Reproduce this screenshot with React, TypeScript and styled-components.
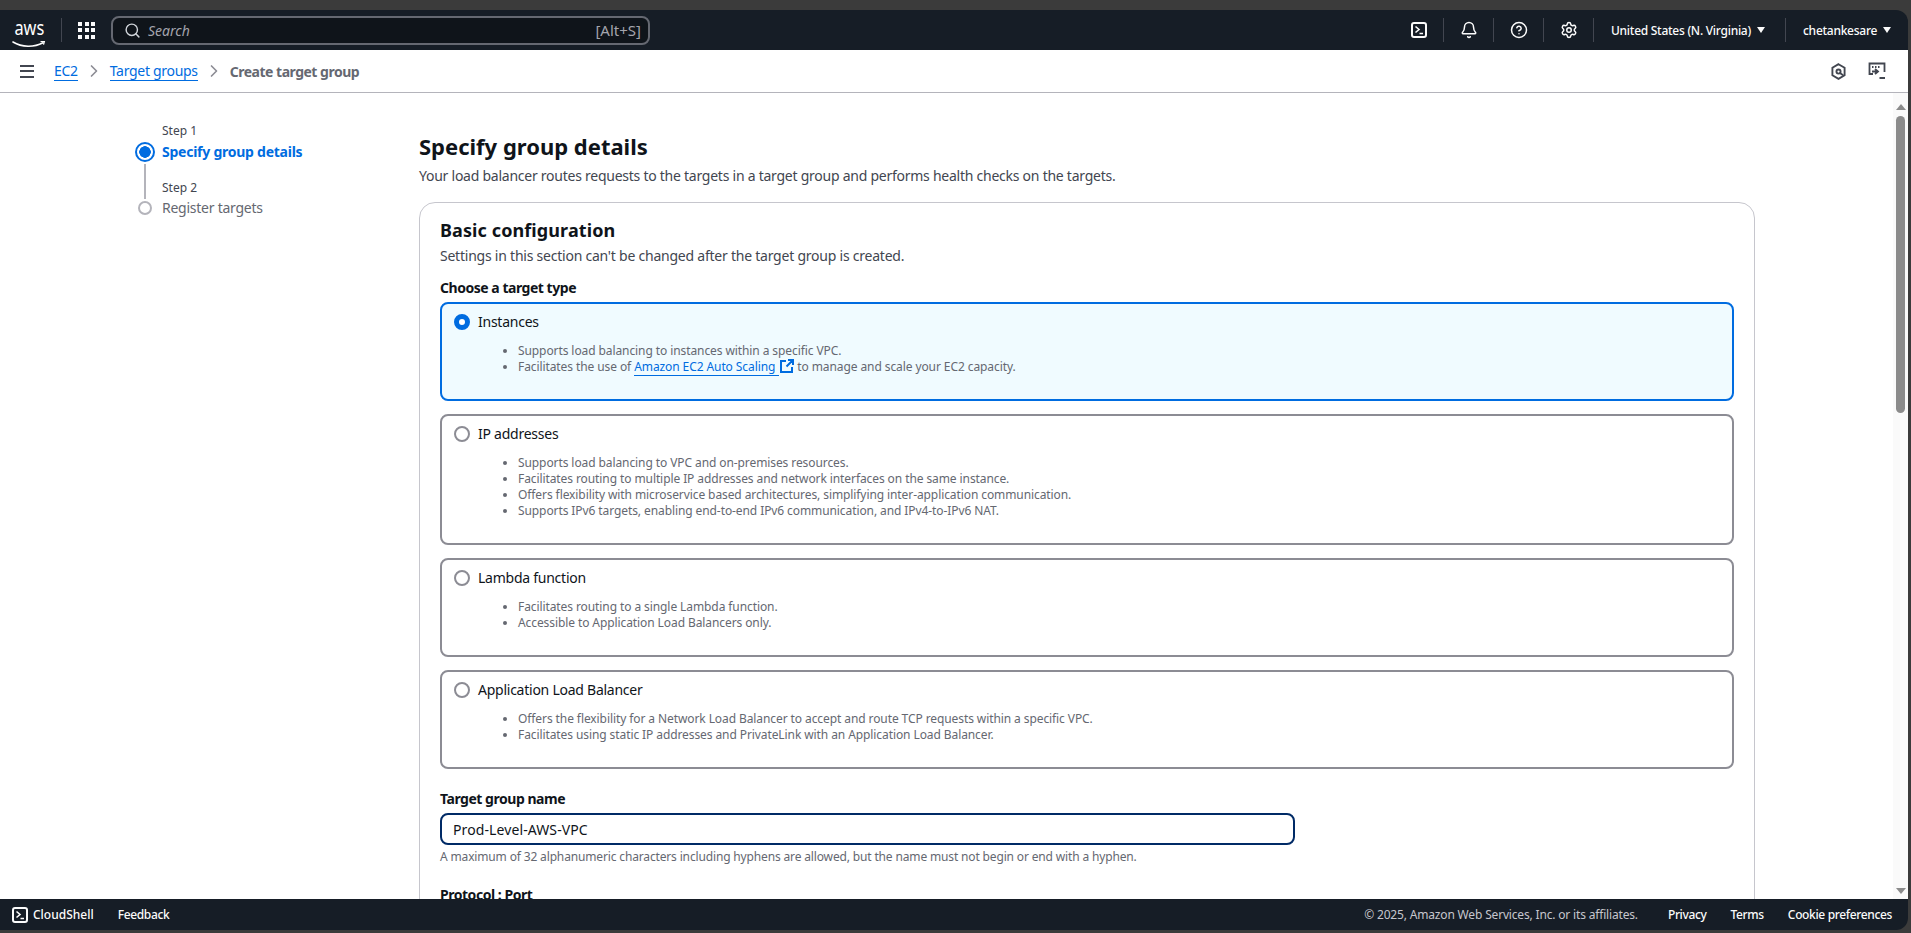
import React from 'react';
import styled, { createGlobalStyle } from 'styled-components';
import { Bell, ChevronRight, CircleHelp, Search, Settings } from 'lucide-react';

const GlobalStyle = createGlobalStyle`
  html, body {
    margin: 0;
    height: 100%;
    overflow: hidden;
    font-family: "Noto Sans", "Open Sans", Arial, sans-serif;
    color: #0f141a;
  }
  * { box-sizing: border-box; }
`;

const Frame = styled.div`
  height: 100vh;
  display: flex;
  flex-direction: column;
  padding: 10px 3px 3px 0;
  background: #3b3b3b;
`;

/* top navigation */
const TopNav = styled.header`
  height: 40px;
  flex: none;
  display: flex;
  align-items: center;
  padding-left: 12px;
  background: #161d26;
  border-radius: 0 12px 0 0;
  color: #fbfbfb;
`;

const NavDivider = styled.span`
  width: 1px;
  height: 24px;
  flex: none;
  background: #424650;
`;

const LogoLink = styled.a`
  width: 34px;
  height: 40px;
  flex: none;
  margin-right: 15px;
  display: flex;
  flex-direction: column;
  align-items: center;
  padding-top: 5px;
`;

const LogoText = styled.span`
  font-size: 19px;
  line-height: 26px;
  color: #fff;
  transform: scaleX(0.86);
`;

const GridButton = styled.span`
  margin: 0 16px 0 16px;
  display: grid;
  grid-template-columns: repeat(3, 4px);
  grid-gap: 2.5px;
  flex: none;
`;

const GridDot = styled.i`
  width: 4px;
  height: 4px;
  background: #fbfbfb;
  display: block;
`;

const SearchBox = styled.div`
  width: 539px;
  height: 29px;
  flex: none;
  display: flex;
  align-items: center;
  padding: 0 7px 0 11px;
  background: #0f141a;
  border: 2px solid #656871;
  border-radius: 8px;
  color: #a4a4ad;
  font-size: 15px;
`;

const SearchHint = styled.span`
  margin-left: 7px;
  font-size: 14px;
  font-style: italic;
  flex: 1;
`;

const NavSpacer = styled.div`
  flex: 1;
`;

const NavIcon = styled.span<{ $w: number }>`
  width: ${(p) => p.$w}px;
  display: flex;
  align-items: center;
  justify-content: center;
  flex: none;
`;

const NavMenu = styled.span<{ $left: number; $w: number }>`
  display: flex;
  align-items: center;
  flex: none;
  gap: 6px;
  width: ${(p) => p.$w}px;
  padding-left: ${(p) => p.$left}px;
  font-size: 12px;
  font-weight: 500;
  letter-spacing: -0.27px;
  white-space: nowrap;
`;

const Caret = styled.i`
  width: 0;
  height: 0;
  display: block;
  border-left: 4px solid transparent;
  border-right: 4px solid transparent;
  border-top: 6px solid #fbfbfb;
`;

/* breadcrumb bar */
const CrumbBar = styled.div`
  height: 43px;
  flex: none;
  display: flex;
  align-items: center;
  padding: 0 22px 0 20px;
  background: #fff;
  border-bottom: 1px solid #b4b4bb;
  font-size: 14px;
`;

const Hamburger = styled.span`
  width: 14px;
  height: 13px;
  margin-right: 20px;
  flex: none;
  border-top: 2px solid #424650;
  border-bottom: 2px solid #424650;
  position: relative;
  &::after {
    content: '';
    position: absolute;
    left: 0;
    right: 0;
    top: 3.5px;
    height: 2px;
    background: #424650;
  }
`;

const CrumbLink = styled.a`
  color: #006ce0;
  border-bottom: 1px solid #006ce0;
  line-height: 19px;
  letter-spacing: -0.3px;
`;

const CrumbSep = styled(ChevronRight)`
  width: 20px;
  height: 20px;
  margin: 0 6px;
  color: #8c8c94;
  flex: none;
`;

const CrumbCurrent = styled.span`
  color: #656871;
  font-weight: 700;
  letter-spacing: -0.5px;
`;

const CrumbTools = styled.div`
  margin-left: auto;
  display: flex;
  align-items: center;
  gap: 22px;
`;

/* page body */
const Body = styled.div`
  flex: 1;
  min-height: 0;
  display: flex;
  background: #fff;
`;

const Main = styled.main`
  flex: 1;
  min-width: 0;
  overflow: hidden;
  display: grid;
  grid-template-columns: 284px 1336px;
  padding-left: 135px;
  align-content: start;
`;

const Stepper = styled.nav`
  padding-top: 30px;
  display: grid;
  grid-template-columns: 20px 1fr;
  column-gap: 7px;
  align-content: start;
`;

const StepRail = styled.i`
  width: 2px;
  justify-self: center;
  margin: 2px 0 -1px;
  background: #b4b4bb;
  display: block;
`;

const StepLabel = styled.span<{ $second?: boolean }>`
  grid-column: 2;
  font-size: 12px;
  line-height: 16px;
  color: #424650;
  padding-top: ${(p) => (p.$second ? 18 : 0)}px;
  padding-bottom: ${(p) => (p.$second ? 2 : 3)}px;
`;

const StepDot = styled.span<{ $active?: boolean }>`
  justify-self: center;
  align-self: center;
  border-radius: 50%;
  width: ${(p) => (p.$active ? 20 : 14)}px;
  height: ${(p) => (p.$active ? 20 : 14)}px;
  border: 2px solid ${(p) => (p.$active ? '#006ce0' : '#b4b4bb')};
  background: ${(p) => (p.$active ? 'radial-gradient(circle, #006ce0 0 5.5px, #fff 6px)' : '#fff')};
`;

const StepTitle = styled.span<{ $active?: boolean }>`
  font-size: 14px;
  line-height: 20px;
  letter-spacing: -0.25px;
  font-weight: ${(p) => (p.$active ? 700 : 400)};
  color: ${(p) => (p.$active ? '#006ce0' : '#656871')};
`;

const Content = styled.section`
  padding-top: 38px;
`;

const PageTitle = styled.h1`
  margin: 0;
  font-size: 22px;
  line-height: 30px;
  font-weight: 700;
`;

const PageDesc = styled.p`
  margin: 5px 0 16px;
  font-size: 14px;
  line-height: 20px;
  letter-spacing: -0.25px;
  color: #424650;
`;

const Card = styled.div`
  border: 1px solid #c6c6cd;
  border-radius: 16px;
  padding: 16px 20px 20px;
`;

const CardTitle = styled.h2`
  margin: 0;
  font-size: 18px;
  line-height: 22px;
  font-weight: 700;
  letter-spacing: 0.1px;
`;

const CardDesc = styled.p`
  margin: 5px 0 12px;
  font-size: 14px;
  line-height: 20px;
  letter-spacing: -0.23px;
  color: #424650;
`;

const FieldLabel = styled.label`
  display: block;
  font-size: 14px;
  line-height: 20px;
  font-weight: 700;
  letter-spacing: -0.47px;
`;

const TileGroup = styled.div`
  margin: 4px 0 20px;
  display: flex;
  flex-direction: column;
  gap: 13px;
`;

const Tile = styled.div<{ $selected?: boolean }>`
  border: 2px solid ${(p) => (p.$selected ? '#006ce0' : '#8c8c94')};
  border-radius: 8px;
  background: ${(p) => (p.$selected ? '#f0fbff' : '#fff')};
  padding: 8px 12px 24px;
`;

const TileHead = styled.div`
  display: flex;
  align-items: center;
  gap: 8px;
  font-size: 14px;
  line-height: 20px;
  letter-spacing: -0.25px;
`;

const Radio = styled.span<{ $selected?: boolean }>`
  width: 16px;
  height: 16px;
  flex: none;
  border-radius: 50%;
  background: #fff;
  border: ${(p) => (p.$selected ? '5px solid #006ce0' : '2px solid #8c8c94')};
`;

const TileList = styled.ul`
  margin: 11px 0 0;
  padding: 0 0 0 64px;
  font-size: 12px;
  line-height: 16px;
  letter-spacing: -0.09px;
  color: #656871;
`;

const TileLink = styled.a`
  color: #006ce0;
  border-bottom: 1px solid #006ce0;
  padding-right: 4px;
`;

const ExternalIcon = styled.svg`
  width: 14px;
  height: 14px;
  margin: 0 3px 0 1px;
  vertical-align: -2px;
  fill: none;
  stroke: #006ce0;
  stroke-width: 2;
`;

const NameInput = styled.input`
  display: block;
  width: 855px;
  height: 32px;
  margin-top: 4px;
  padding: 0 11px;
  border: 2px solid #002a66;
  border-radius: 8px;
  outline: none;
  font: inherit;
  font-size: 14px;
  letter-spacing: 0.1px;
  color: #0f141a;
  background: #fff;
`;

const FieldHint = styled.p`
  margin: 4px 0 20px;
  font-size: 12px;
  line-height: 16px;
  letter-spacing: -0.15px;
  color: #656871;
`;

/* scrollbar column */
const ScrollColumn = styled.div`
  width: 15px;
  flex: none;
  background: #fafafa;
  display: flex;
  flex-direction: column;
  align-items: center;
  padding: 11px 0 5px 0;
`;

const ScrollArrow = styled.i<{ $down?: boolean }>`
  width: 0;
  height: 0;
  display: block;
  flex: none;
  border-left: 5px solid transparent;
  border-right: 5px solid transparent;
  border-bottom: ${(p) => (p.$down ? '0' : '6px solid #8b8b8b')};
  border-top: ${(p) => (p.$down ? '6px solid #8b8b8b' : '0')};
  margin-top: ${(p) => (p.$down ? 'auto' : '0')};
`;

const ScrollThumb = styled.div`
  width: 9px;
  height: 297px;
  margin-top: 6px;
  border-radius: 5px;
  background: #8b8b8b;
  flex: none;
`;

/* footer */
const Footer = styled.footer`
  height: 31px;
  flex: none;
  display: flex;
  align-items: center;
  padding: 0 16px 0 12px;
  background: #161d26;
  border-radius: 0 0 12px 0;
  font-size: 12px;
  color: #fbfbfb;
`;

const ShellLink = styled.span`
  display: flex;
  align-items: center;
  gap: 5px;
  font-weight: 500;
  margin-right: 24px;
`;

const FooterLink = styled.a<{ $first?: boolean }>`
  font-weight: 500;
  letter-spacing: -0.35px;
  margin-left: ${(p) => (p.$first ? 0 : 24)}px;
`;

const Copyright = styled.span`
  margin-left: auto;
  margin-right: 6px;
  letter-spacing: -0.17px;
  color: #c6c6cd;
`;

const ShellIcon: React.FC<{ size: number }> = ({ size }) => (
  <svg width={size} height={size} viewBox="0 0 16 16" fill="none" stroke="#fbfbfb" strokeWidth="2">
    <rect x="1" y="1" width="14" height="14" rx="2" />
    <path d="M4.5 4.5 8 7.5l-3.5 3M8.5 11.5H12" strokeWidth="1.6" />
  </svg>
);

const LogoSmile = () => (
  <svg width="34" height="8" viewBox="0 0 34 8">
    <path d="M1 1c9 5.5 21 5.5 30 .8" fill="none" stroke="#fff" strokeWidth="1.6" strokeLinecap="round" />
    <path d="M28.5 .5l4-.5-1 3.6" fill="none" stroke="#fff" strokeWidth="1.3" />
  </svg>
);

const tiles = [
  { name: 'IP addresses', items: [
    'Supports load balancing to VPC and on-premises resources.',
    'Facilitates routing to multiple IP addresses and network interfaces on the same instance.',
    'Offers flexibility with microservice based architectures, simplifying inter-application communication.',
    'Supports IPv6 targets, enabling end-to-end IPv6 communication, and IPv4-to-IPv6 NAT.',
  ] },
  { name: 'Lambda function', items: [
    'Facilitates routing to a single Lambda function.',
    'Accessible to Application Load Balancers only.',
  ] },
  { name: 'Application Load Balancer', items: [
    'Offers the flexibility for a Network Load Balancer to accept and route TCP requests within a specific VPC.',
    'Facilitates using static IP addresses and PrivateLink with an Application Load Balancer.',
  ] },
];

export default function App() {
  return (
    <Frame>
      <GlobalStyle />
      <TopNav>
        <LogoLink>
          <LogoText>aws</LogoText>
          <LogoSmile />
        </LogoLink>
        <NavDivider />
        <GridButton>
          {Array.from({ length: 9 }).map((_, i) => <GridDot key={i} />)}
        </GridButton>
        <SearchBox>
          <Search size={17} color="#d1d5db" />
          <SearchHint>Search</SearchHint>
          <span>[Alt+S]</span>
        </SearchBox>
        <NavSpacer />
        <NavIcon $w={48}><ShellIcon size={16} /></NavIcon>
        <NavDivider />
        <NavIcon $w={49}><Bell size={18} strokeWidth={2} /></NavIcon>
        <NavDivider />
        <NavIcon $w={49}><CircleHelp size={18} strokeWidth={2} /></NavIcon>
        <NavDivider />
        <NavIcon $w={49}><Settings size={18} strokeWidth={2} /></NavIcon>
        <NavDivider />
        <NavMenu $left={17} $w={191}>United States (N. Virginia) <Caret /></NavMenu>
        <NavDivider />
        <NavMenu $left={17} $w={122}>chetankesare <Caret /></NavMenu>
      </TopNav>

      <CrumbBar>
        <Hamburger />
        <CrumbLink>EC2</CrumbLink>
        <CrumbSep strokeWidth={2} />
        <CrumbLink>Target groups</CrumbLink>
        <CrumbSep strokeWidth={2} />
        <CrumbCurrent>Create target group</CrumbCurrent>
        <CrumbTools>
          <svg width="15" height="17" viewBox="0 0 16 18" fill="none" stroke="#424650" strokeWidth="2">
            <path d="M8 1.2 14.5 5v8L8 16.8 1.5 13V5z" />
            <circle cx="8" cy="9" r="2.2" />
            <path d="M9.5 10.5 13 13" />
          </svg>
          <svg width="18" height="18" viewBox="0 0 18 18" fill="none" stroke="#424650" strokeWidth="1.8">
            <path d="M5 12H1.5V1.5h15V10" />
            <path d="M4 5h1.5M7 5h1.5M10 5h1.5" />
            <path d="M4 9.5h5M7 7l3 2.5L7 12" />
            <path d="M11.5 16h5.5" strokeWidth="2" />
          </svg>
        </CrumbTools>
      </CrumbBar>

      <Body>
        <Main>
          <Stepper>
            <StepLabel>Step 1</StepLabel>
            <StepDot $active />
            <StepTitle $active>Specify group details</StepTitle>
            <StepRail />
            <StepLabel $second>Step 2</StepLabel>
            <StepDot />
            <StepTitle>Register targets</StepTitle>
          </Stepper>
          <Content>
            <PageTitle>Specify group details</PageTitle>
            <PageDesc>Your load balancer routes requests to the targets in a target group and performs health checks on the targets.</PageDesc>
            <Card>
              <CardTitle>Basic configuration</CardTitle>
              <CardDesc>Settings in this section can't be changed after the target group is created.</CardDesc>
              <FieldLabel>Choose a target type</FieldLabel>
              <TileGroup>
                <Tile $selected>
                  <TileHead><Radio $selected />Instances</TileHead>
                  <TileList>
                    <li>Supports load balancing to instances within a specific VPC.</li>
                    <li>
                      Facilitates the use of <TileLink>Amazon EC2 Auto Scaling</TileLink>
                      <ExternalIcon viewBox="0 0 14 14">
                        <path d="M6 2H1v11h11V8M8 1h5v5M13 1 6.5 7.5" />
                      </ExternalIcon>
                      to manage and scale your EC2 capacity.
                    </li>
                  </TileList>
                </Tile>
                {tiles.map((tile) => (
                  <Tile key={tile.name}>
                    <TileHead><Radio />{tile.name}</TileHead>
                    <TileList>
                      {tile.items.map((item) => <li key={item}>{item}</li>)}
                    </TileList>
                  </Tile>
                ))}
              </TileGroup>
              <FieldLabel>Target group name</FieldLabel>
              <NameInput readOnly value="Prod-Level-AWS-VPC" />
              <FieldHint>A maximum of 32 alphanumeric characters including hyphens are allowed, but the name must not begin or end with a hyphen.</FieldHint>
              <FieldLabel>Protocol : Port</FieldLabel>
            </Card>
          </Content>
        </Main>
        <ScrollColumn>
          <ScrollArrow />
          <ScrollThumb />
          <ScrollArrow $down />
        </ScrollColumn>
      </Body>

      <Footer>
        <ShellLink><ShellIcon size={16} />CloudShell</ShellLink>
        <FooterLink $first>Feedback</FooterLink>
        <Copyright>© 2025, Amazon Web Services, Inc. or its affiliates.</Copyright>
        <FooterLink>Privacy</FooterLink>
        <FooterLink>Terms</FooterLink>
        <FooterLink>Cookie preferences</FooterLink>
      </Footer>
    </Frame>
  );
}
